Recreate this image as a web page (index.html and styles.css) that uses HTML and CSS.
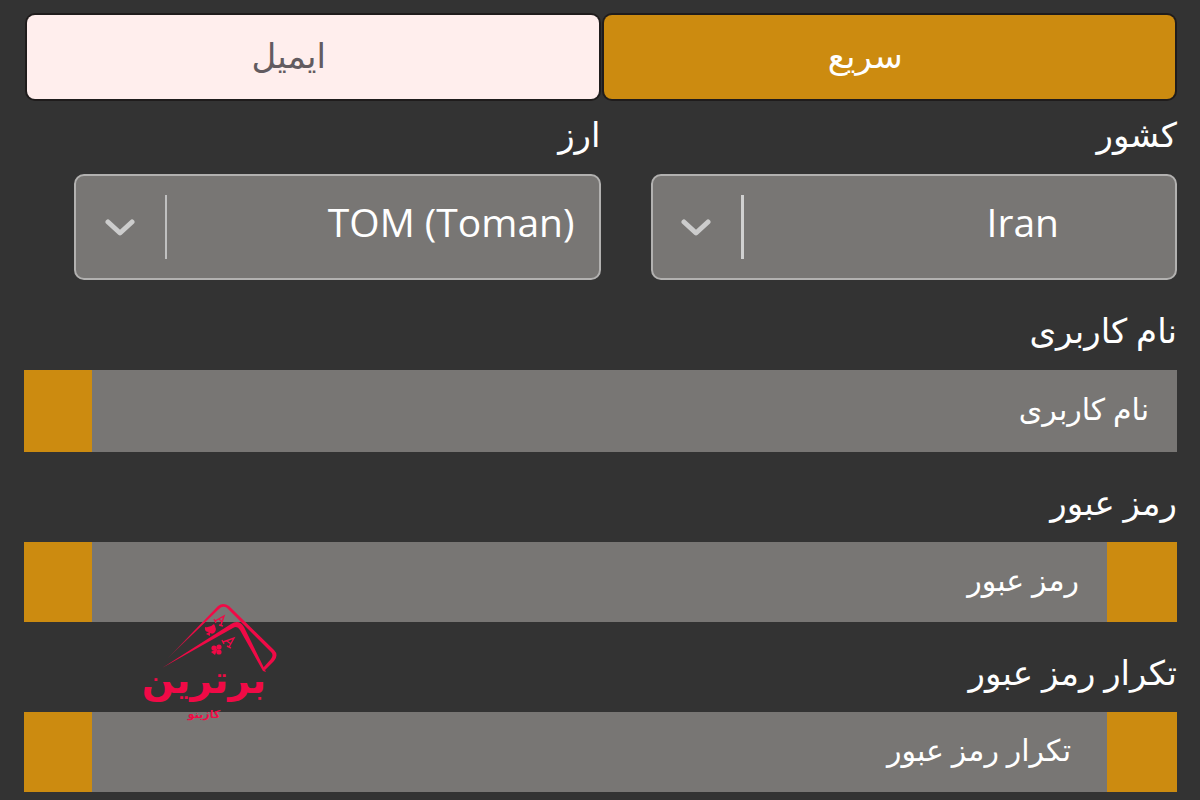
FILE: index.html
```html
<!DOCTYPE html>
<html lang="fa" dir="rtl">
<head>
<meta charset="utf-8">
<meta name="viewport" content="width=device-width, initial-scale=1">
<title>ثبت نام</title>
<link rel="stylesheet" href="styles.css">
</head>
<body>
<form class="signup">
  <div class="tabs">
    <button type="button" class="tab tab-active">سریع</button>
    <button type="button" class="tab">ایمیل</button>
  </div>

  <div class="selects">
    <div class="choice">
      <label class="label label-top" for="country">کشور</label>
      <div class="select-box">
        <select id="country" class="select select-country" dir="ltr"><option>Iran</option></select>
        <span class="indicator indicator-strong">
          <svg class="chevron" viewBox="0 0 30 20" aria-hidden="true"><path d="M3 5L15 16L27 5"/></svg>
        </span>
      </div>
    </div>
    <div class="choice">
      <label class="label label-top" for="currency">ارز</label>
      <div class="select-box">
        <select id="currency" class="select" dir="ltr"><option>TOM (Toman)</option></select>
        <span class="indicator">
          <svg class="chevron" viewBox="0 0 30 20" aria-hidden="true"><path d="M3 5L15 16L27 5"/></svg>
        </span>
      </div>
    </div>
  </div>

  <label class="label" for="username">نام کاربری</label>
  <div class="field field-tall">
    <input id="username" class="input" type="text" placeholder="نام کاربری">
    <span class="block"></span>
  </div>

  <label class="label" for="password">رمز عبور</label>
  <div class="field">
    <span class="block"></span>
    <input id="password" class="input" type="password" placeholder="رمز عبور">
    <span class="block"></span>
  </div>

  <label class="label" for="repeat">تکرار رمز عبور</label>
  <div class="field">
    <span class="block"></span>
    <input id="repeat" class="input input-inset" type="password" placeholder="تکرار رمز عبور">
    <span class="block"></span>
  </div>

  <div class="brand">
    <svg class="brand-cards" viewBox="0 0 140 84" aria-hidden="true">
      <defs>
        <linearGradient id="fade" x1="0" y1="1" x2="1" y2="0"><stop offset="0" stop-color="#f00a46" stop-opacity=".2"/><stop offset=".4" stop-color="#f00a46"/></linearGradient>
      </defs>
      <path fill="url(#fade)" d="M28 68L78 16Q83 12 89 16L134 60Q139 65 134 71L125 80L123 78L131 69Q134 65 131 62L87 18Q83 15 79 19Z"/>
      <path fill="#f00a46" d="M22 78L91 34Q99 29 104 37L126 82L123 81L100 40Q97 35 93 38Z"/>
      <g fill="#f00a46">
        <path d="M65 37Q70 38 74 34Q77 39 75 42Q73 45 70 43L70 46L66 44L69 42Q64 42 65 37Z"/>
        <circle cx="79" cy="57" r="2.6"/><circle cx="74" cy="58" r="2.6"/><circle cx="79" cy="62" r="2.6"/><path d="M78 58L75 65L71 62Z"/>
      </g>
      <path fill="none" stroke="#f00a46" stroke-width="1.4" d="M75 31L84 26L81 35M79 29L82 32M74 29L76 33M79 35L83 36M83 52L94 48L89 57M87 51L91 54M82 50L84 54M87 56L91 58"/>
    </svg>
    <span class="brand-name">برترین</span>
    <span class="brand-sub">کازینو</span>
  </div>
</form>
</body>
</html>
```
FILE: styles.css
```css
* { box-sizing: border-box; }

body {
  margin: 0;
  background: #333;
  color: #fff;
  font-family: "Open Sans", "DejaVu Sans", sans-serif;
}

.signup {
  position: relative;
  padding: 15px 23px 8px 24px;
}

.tabs {
  display: grid;
  grid-template-columns: 1fr 1fr;
  gap: 5px;
  padding: 0 2px 0 3px;
}

.tab {
  height: 84px;
  padding: 0 48px 4px 0;
  border: 0;
  border-radius: 8px;
  background: #ffeeed;
  box-shadow: 0 0 0 2px #1f1c1c;
  color: #625b60;
  font: inherit;
  font-size: 34px;
}

.tab-active {
  background: #cc8b10;
  color: #fff;
}

.selects {
  display: grid;
  grid-template-columns: 1fr 1fr;
}

.label {
  display: flex;
  align-items: center;
  height: 90px;
  padding-top: 10px;
  font-size: 34px;
  line-height: 48px;
}

.label-top {
  height: 75px;
  padding: 0 0 6px;
}

.select-box {
  position: relative;
  margin-left: 50px;
}

.select {
  display: block;
  width: 100%;
  height: 106px;
  padding: 0 24px 12px 92px;
  border: 2px solid #b2b1b0;
  border-radius: 10px;
  appearance: none;
  background: #787674;
  color: #fff;
  font: inherit;
  font-size: 39px;
  text-align: right;
  text-align-last: right;
}

.select-country { padding-right: 116px; }

.indicator {
  position: absolute;
  top: 21px;
  bottom: 21px;
  left: 0;
  width: 93px;
  display: flex;
  align-items: center;
  justify-content: center;
  border-right: 2px solid #c0c0c0;
  pointer-events: none;
}

.indicator-strong { border-right: 3px solid #d0d0d0; }

.chevron {
  width: 30px;
  height: 20px;
  fill: none;
  stroke: #ccc;
  stroke-width: 5;
  stroke-linecap: round;
  stroke-linejoin: round;
}

.field {
  display: flex;
  height: 80px;
  background: #787674;
}

.field-tall { height: 82px; }

.block {
  flex: 0 0 68px;
  background: #cc8b10;
}

.block:first-child { flex-basis: 70px; }

.input {
  flex: 1;
  min-width: 0;
  padding: 0 28px 6px;
  border: 0;
  background: transparent;
  color: #fff;
  font: inherit;
  font-size: 30px;
}

.input-inset { padding-right: 36px; }

.input::placeholder {
  color: #fff;
  opacity: 1;
}

.brand {
  position: absolute;
  top: 590px;
  left: 140px;
  width: 140px;
  color: #f00a46;
  text-align: center;
  pointer-events: none;
}

.brand-cards {
  display: block;
  width: 140px;
  height: 84px;
}

.brand-name {
  display: block;
  margin-top: -24px;
  padding-right: 12px;
  font-size: 38px;
  font-weight: 700;
  line-height: 56px;
}

.brand-sub {
  display: block;
  padding-right: 12px;
  font-size: 11px;
  font-weight: 700;
  line-height: 16px;
}
```
